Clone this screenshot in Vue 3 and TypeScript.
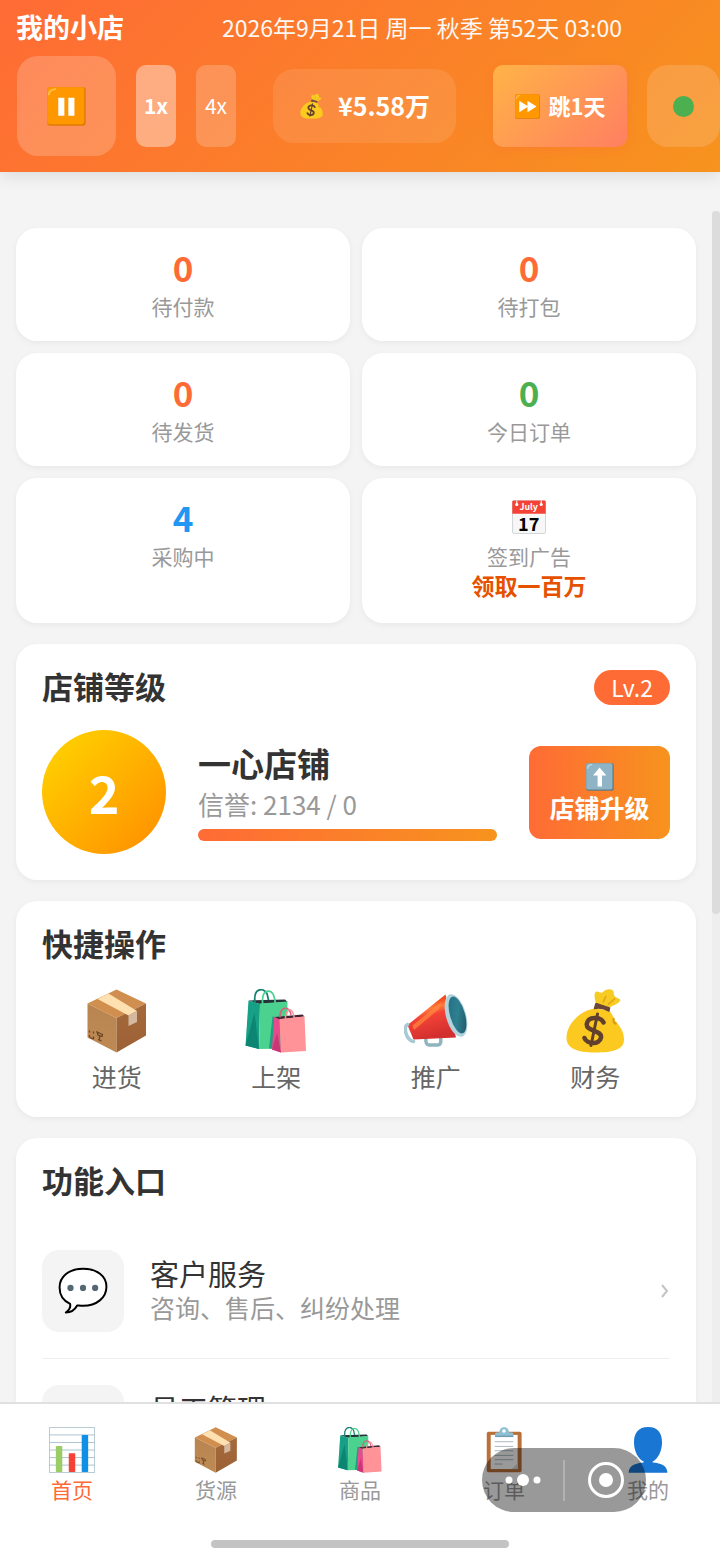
<script setup lang="ts">
import { ref } from 'vue'

interface Stat {
  value: number
  label: string
  tone: 'orange' | 'green' | 'blue'
}
interface Entry {
  icon: string
  label: string
}
interface Feature {
  icon: string
  title: string
  hint: string
}

const stats: Stat[] = [
  { value: 0, label: '待付款', tone: 'orange' },
  { value: 0, label: '待打包', tone: 'orange' },
  { value: 0, label: '待发货', tone: 'orange' },
  { value: 0, label: '今日订单', tone: 'green' },
  { value: 4, label: '采购中', tone: 'blue' },
]

const actions: Entry[] = [
  { icon: 'box', label: '进货' },
  { icon: 'bags', label: '上架' },
  { icon: 'horn', label: '推广' },
  { icon: 'money', label: '财务' },
]

const features: Feature[] = [
  { icon: 'chat', title: '客户服务', hint: '咨询、售后、纠纷处理' },
  { icon: '', title: '员工管理', hint: '' },
]

const tabs: Entry[] = [
  { icon: 'chart', label: '首页' },
  { icon: 'box', label: '货源' },
  { icon: 'bags', label: '商品' },
  { icon: 'clipboard', label: '订单' },
  { icon: 'person', label: '我的' },
]

const speeds = [1, 4]
const speed = ref(1)
const activeTab = ref('首页')
</script>

<template>
  <div class="app">
    <svg class="sprite" aria-hidden="true">
      <defs>
        <linearGradient id="gHorn" x1="0" y1="0" x2="0.3" y2="1">
          <stop offset="0" stop-color="#c62828" />
          <stop offset="0.3" stop-color="#f4511e" />
          <stop offset="0.42" stop-color="#ff7a3d" />
          <stop offset="0.55" stop-color="#f44336" />
          <stop offset="1" stop-color="#d32f2f" />
        </linearGradient>
        <linearGradient id="gBell" x1="0" y1="0" x2="1" y2="1">
          <stop offset="0" stop-color="#1f6f80" />
          <stop offset="0.5" stop-color="#2f7f90" />
          <stop offset="1" stop-color="#1c4f5e" />
        </linearGradient>
        <linearGradient id="gBoxL" x1="0" y1="0" x2="0" y2="1">
          <stop offset="0" stop-color="#b98450" />
          <stop offset="1" stop-color="#bd8a54" />
        </linearGradient>
        <linearGradient id="gBoxR" x1="0" y1="0" x2="0" y2="1">
          <stop offset="0" stop-color="#a56a3b" />
          <stop offset="1" stop-color="#9c6035" />
        </linearGradient>
      </defs>

      <symbol id="i-box" viewBox="0 0 128 128">
        <path d="M63 1 5 29l58 29 59-29z" fill="#d18f4f" />
        <path d="M5 29v68l58 30V58z" fill="url(#gBoxL)" />
        <path d="M122 29v64l-59 34V58z" fill="url(#gBoxR)" />
        <path d="M47 9 25 20l62 33 17-9z" fill="#ffe0b0" />
        <path d="m87 53 17-9v22l-17 8z" fill="#d5b8a0" />
        <path d="M9 83v4m0 5v4M17 85v4m0 6v4M9 97l9 3M24 86l11 5-1 4-8-3zM29 94v7m-3 0 7 3" fill="none" stroke="#694525" stroke-width="2.5" />
      </symbol>

      <symbol id="i-bags" viewBox="0 0 128 128">
        <path d="M9 23 82 21l5 5-55 4z" fill="#263238" />
        <path d="M9 23 32 30 30 120 3 113z" fill="#16a085" />
        <path d="M21 48 30 120 3 113z" fill="#0c8573" />
        <path d="M32 29 87 25 86 119 30 120z" fill="#4bd28f" />
        <path d="M57 55 71 58 72 120 50 119z" fill="#219f83" />
        <path d="M22 27C18-2 38-4 46 9L49 22" fill="none" stroke="#16806f" stroke-width="3.5" />
        <path d="M38 39C34 9 42 4 49 4s13 8 14 30" fill="none" stroke="#4bd28f" stroke-width="3.5" />
        <path d="M61 56 117 51 121 55 71 61z" fill="#3e2432" />
        <path d="M60 56 71 61 74 127 56 121z" fill="#e84a8b" />
        <path d="M66 88 74 127 56 121z" fill="#c93675" />
        <path d="M71 60 121 55 124 124 74 127z" fill="#ff9398" />
        <path d="M72 57C70 35 92 31 94 53" fill="none" stroke="#dc5c7e" stroke-width="3" />
        <path d="M83 64c-2-23 15-35 18-2" fill="none" stroke="#ff9398" stroke-width="3" />
      </symbol>

      <symbol id="i-horn" viewBox="0 0 128 128">
        <path d="M44 97q-2 15 7 15h17q8-1 5-16" fill="none" stroke="#90b4be" stroke-width="7" />
        <path d="M7 72 83 11 104 97 19 101z" fill="url(#gHorn)" />
        <path d="M17 73 76 25l-7 16-49 41z" fill="#ff8a3d" opacity=".7" />
        <path d="M7 71C-2 76 4 102 19 105" fill="none" stroke="#a7cad4" stroke-width="7" stroke-linecap="round" />
        <ellipse cx="104" cy="53" rx="20" ry="44" transform="rotate(-16 104 53)" fill="#b2d3dc" />
        <ellipse cx="107" cy="52" rx="15" ry="38" transform="rotate(-16 107 52)" fill="url(#gBell)" />
      </symbol>

      <symbol id="i-money" viewBox="0 0 128 128">
        <path d="M67 31C61 15 62 4 69 5q5 3 10 2C86-2 99-1 101 5c1 4 0 8 4 11 5 4 11 2 9 8-4 6-13 8-21 13z" fill="#f8cb22" />
        <path d="m80 27 6-13M90 31l14-12" stroke="#dda414" stroke-width="3" fill="none" />
        <path d="M64 39C34 43 7 70 7 98c0 20 20 29 57 29s58-6 58-26c0-16-9-28-17-37-5-5-4-12-13-21z" fill="#fcc921" />
        <path d="M102 58q-4 9 5 12" stroke="#dc9b12" stroke-width="4" fill="none" />
        <path d="m66 29 27 9-1 6q-14-8-29-5z" fill="#6b4638" stroke="#6b4638" stroke-width="3" stroke-linejoin="round" />
        <path d="M81 67C76 56 52 54 48 68c-5 18 31 13 28 29-3 16-29 13-33 1" fill="none" stroke="#61402e" stroke-width="9" stroke-linecap="round" />
        <path d="m69 50-13 63" stroke="#61402e" stroke-width="6" stroke-linecap="round" />
      </symbol>

      <symbol id="i-chat" viewBox="0 0 128 128">
        <path d="M64 7c36 0 60 19 60 46 0 28-25 49-60 49-7 0-12-1-15-1-7 13-16 18-29 18 8-6 13-14 11-22C14 89 4 76 4 55 4 27 28 7 64 7z" fill="#fff" stroke="#000" stroke-width="5" stroke-linejoin="round" />
        <g fill="#546874"><circle cx="32" cy="56" r="8" /><circle cx="64" cy="56" r="8" /><circle cx="95" cy="56" r="8" /></g>
      </symbol>

      <symbol id="i-chart" viewBox="0 0 128 128">
        <path d="M1 1h126v126H1z" fill="#fff" />
        <path d="M1 22h126M1 43h126M1 64h126M1 85h126M1 106h126M1 1h126v126H1z" fill="none" stroke="#a5bdc7" stroke-width="2.5" />
        <rect x="19" y="53" width="18" height="72" rx="2" fill="#9ccc65" />
        <rect x="55" y="73" width="18" height="52" rx="2" fill="#f44336" />
        <rect x="91" y="22" width="18" height="103" rx="2" fill="#0f8fe5" />
      </symbol>

      <symbol id="i-clipboard" viewBox="0 0 128 128">
        <rect x="16" y="13" width="97" height="113" rx="5" fill="#ba7139" />
        <path d="M27 22h75v95H27z" fill="#fff" />
        <path d="m102 101-16 16h16z" fill="#cfd8dc" />
        <path d="M38 41h52M38 54h52M38 66h52M38 79h52M38 91h52M38 103h22" stroke="#8b9da6" stroke-width="2" />
        <path d="M51 15c0-19 27-19 27 0h8q4 0 4 5v8H39v-8q0-5 4-5z" fill="#8fbfd2" />
        <circle cx="64" cy="11" r="5" fill="#fff" />
        <path d="M39 24h51v4H39z" fill="#6f9caf" />
      </symbol>

      <symbol id="i-person" viewBox="0 0 128 128">
        <path d="M64 0c28 0 39 17 39 43 0 24-12 47-26 53v3c25 2 40 9 41 28H10c1-19 17-26 42-28v-3C38 91 25 68 25 43 25 17 37 0 64 0z" fill="#1976d2" />
      </symbol>

      <symbol id="i-pause" viewBox="0 0 128 128">
        <rect x="1" y="1" width="126" height="126" rx="9" fill="#e07c00" />
        <rect x="1" y="1" width="121" height="121" rx="8" fill="#ff9800" />
        <path d="M6 24Q8 9 27 7" fill="none" stroke="#ffbd52" stroke-width="6" stroke-linecap="round" />
        <path d="M37 35h20v59H37zM70 35h20v59H70z" fill="#fff" />
      </symbol>

      <symbol id="i-forward" viewBox="0 0 128 128">
        <rect x="1" y="1" width="126" height="126" rx="8" fill="#e07c00" />
        <rect x="1" y="1" width="122" height="122" rx="8" fill="#ff9800" />
        <path d="M7 22Q9 9 24 7" fill="none" stroke="#ffbd52" stroke-width="6" stroke-linecap="round" />
        <path d="M22 34v60l42-27v27l46-30-46-30v27z" fill="#fff" />
      </symbol>

      <symbol id="i-up" viewBox="0 0 128 128">
        <rect x="1" y="1" width="126" height="126" rx="8" fill="#5c7d8b" />
        <rect x="1" y="1" width="120" height="120" rx="8" fill="#8eb4c5" />
        <path d="M7 24Q9 9 26 7" fill="none" stroke="#c4dce6" stroke-width="6" stroke-linecap="round" />
        <path d="M62 21 93 57H73v50H53V57H32z" fill="#fff" />
      </symbol>
    </svg>

    <header class="topbar">
      <div class="headline">
        <h1 class="shop">我的小店</h1>
        <time class="date" datetime="2026-09-21T03:00">2026年9月21日 周一 秋季 第52天 03:00</time>
      </div>
      <div class="controls">
        <div class="group">
          <button class="pause" type="button" aria-label="暂停"><svg class="ico-pause"><use href="#i-pause" /></svg></button>
          <button
            v-for="s in speeds"
            :key="s"
            class="speed"
            :class="{ on: speed === s }"
            type="button"
            @click="speed = s"
          >{{ s }}x</button>
        </div>
        <div class="cash"><svg class="ico-small"><use href="#i-money" /></svg><span>¥5.58万</span></div>
        <div class="group">
          <button class="skip" type="button"><svg class="ico-small"><use href="#i-forward" /></svg><span>跳1天</span></button>
          <button class="status" type="button" aria-label="在线状态"><span class="dot"></span></button>
        </div>
      </div>
    </header>

    <div class="body">
      <main class="content">
        <section class="stats">
          <div v-for="s in stats" :key="s.label" class="card stat">
            <strong class="num" :class="s.tone">{{ s.value }}</strong>
            <span class="caption">{{ s.label }}</span>
          </div>
          <button class="card stat" type="button">
            <span class="num">
              <svg class="ico-cal" viewBox="0 0 128 128">
                <rect x="2" y="3" width="124" height="123" rx="5" fill="#f7f7f7" stroke="#c6cdd1" stroke-width="3" />
                <path d="M1 52V7q0-5 5-5h116q5 0 5 5v45z" fill="#f44336" />
                <path d="M18 2v15M110 2v15" stroke="#fff" stroke-width="4" />
                <circle cx="18" cy="17" r="6" fill="#fff" />
                <circle cx="110" cy="17" r="6" fill="#fff" />
                <text x="63" y="37" class="cal-month">July</text>
                <text x="63" y="116" class="cal-day">17</text>
              </svg>
            </span>
            <span class="caption">签到广告</span>
            <span class="claim">领取一百万</span>
          </button>
        </section>

        <section class="card panel">
          <div class="panel-head">
            <h2>店铺等级</h2>
            <span class="badge">Lv.2</span>
          </div>
          <div class="level">
            <div class="medal">2</div>
            <div class="info">
              <h3>一心店铺</h3>
              <p>信誉: 2134 / 0</p>
              <div class="bar"></div>
            </div>
            <button class="upgrade" type="button">
              <svg class="ico-up"><use href="#i-up" /></svg>
              <span>店铺升级</span>
            </button>
          </div>
        </section>

        <section class="card panel">
          <div class="panel-head"><h2>快捷操作</h2></div>
          <div class="actions">
            <button v-for="a in actions" :key="a.label" class="action" type="button">
              <svg class="ico-action"><use :href="'#i-' + a.icon" /></svg>
              <span>{{ a.label }}</span>
            </button>
          </div>
        </section>

        <section class="card panel">
          <div class="panel-head"><h2>功能入口</h2></div>
          <a v-for="f in features" :key="f.title" class="feature" href="#">
            <span class="tile"><svg v-if="f.icon" class="ico-tile"><use :href="'#i-' + f.icon" /></svg></span>
            <span class="desc">
              <span class="name">{{ f.title }}</span>
              <span class="hint">{{ f.hint }}</span>
            </span>
            <svg class="chevron" viewBox="0 0 8 14"><path d="m1 1 5 6-5 6" fill="none" stroke="#c4c4c4" stroke-width="2" /></svg>
          </a>
        </section>
      </main>
      <div class="rail"><div class="thumb"></div></div>
    </div>

    <footer class="bottom">
      <nav class="tabs">
        <a
          v-for="t in tabs"
          :key="t.label"
          class="tab"
          :class="{ active: activeTab === t.label }"
          href="#"
          @click.prevent="activeTab = t.label"
        >
          <svg class="ico-tab"><use :href="'#i-' + t.icon" /></svg>
          <span>{{ t.label }}</span>
        </a>
      </nav>
      <div class="indicator"></div>
      <div class="capsule">
        <button type="button" aria-label="更多">
          <svg class="more" viewBox="0 0 36 14"><g fill="#fff"><circle cx="4" cy="7" r="3.5" /><circle cx="18" cy="7" r="6" /><circle cx="32" cy="7" r="3.5" /></g></svg>
        </button>
        <span class="split"></span>
        <button type="button" aria-label="关闭">
          <svg class="target" viewBox="0 0 36 36"><circle cx="18" cy="18" r="16.5" fill="none" stroke="#fff" stroke-width="3" /><circle cx="18" cy="18" r="7" fill="#fff" /></svg>
        </button>
      </div>
    </footer>
  </div>
</template>

<style>
body {
  background: #f4f4f4;
}
</style>

<style scoped>
.app {
  position: relative;
  display: flex;
  flex-direction: column;
  height: 100vh;
  overflow: hidden;
  background: #f4f4f4;
  color: #333;
  font-family: "Noto Sans CJK SC", "Noto Sans", sans-serif;
}
.sprite {
  position: absolute;
  width: 0;
  height: 0;
}
svg {
  display: block;
  flex: none;
}
h1, h2, h3, p {
  margin: 0;
}
button {
  padding: 0;
  border: 0;
  background: none;
  color: inherit;
  font: inherit;
  cursor: pointer;
}
a {
  color: inherit;
  text-decoration: none;
}

/* top bar */
.topbar {
  flex: none;
  color: #fff;
  background: linear-gradient(135deg, #ff6b35, #f7931e);
  box-shadow: 0 4px 16px rgba(0, 0, 0, 0.1);
}
.headline {
  display: flex;
  align-items: center;
  height: 53px;
  padding: 0 0 3px 16px;
}
.shop {
  font-size: 27px;
  line-height: 36px;
  font-weight: 700;
}
.date {
  flex: 1;
  text-align: center;
  font-size: 23px;
  line-height: 36px;
  white-space: nowrap;
  opacity: 0.95;
}
.controls {
  display: flex;
  align-items: center;
  gap: 37px;
  padding: 0 0 16px 17px;
}
.group {
  display: flex;
  align-items: center;
  gap: 20px;
}
.pause {
  display: grid;
  place-items: center;
  width: 99px;
  height: 100px;
  border-radius: 21px;
  background: rgba(255, 255, 255, 0.2);
}
.ico-pause {
  width: 39px;
  height: 39px;
}
.speed {
  width: 40px;
  height: 82px;
  padding-bottom: 2px;
  border-radius: 10px;
  background: rgba(255, 255, 255, 0.2);
  font-size: 21px;
}
.speed.on {
  background: rgba(255, 255, 255, 0.4);
  font-weight: 700;
}
.cash {
  flex: 1;
  display: flex;
  align-items: center;
  justify-content: center;
  gap: 14px;
  height: 74px;
  border-radius: 21px;
  background: rgba(255, 255, 255, 0.1);
  font-size: 25px;
  font-weight: 700;
  white-space: nowrap;
}
.cash span,
.skip span {
  padding-bottom: 3px;
}
.ico-small {
  width: 25px;
  height: 25px;
}
.skip {
  display: flex;
  align-items: center;
  justify-content: center;
  gap: 9px;
  width: 134px;
  height: 82px;
  border-radius: 10px;
  background: linear-gradient(135deg, #ffb347, #ff7f61);
  box-shadow: 0 2px 8px rgba(255, 107, 53, 0.3);
  font-size: 22px;
  font-weight: 700;
  white-space: nowrap;
}
.status {
  display: grid;
  place-items: center;
  width: 73px;
  height: 82px;
  border-radius: 21px;
  background: rgba(255, 255, 255, 0.15);
}
.dot {
  width: 21px;
  height: 21px;
  border-radius: 50%;
  background: #4caf50;
}

/* scrolling area */
.body {
  flex: 1;
  min-height: 0;
  display: flex;
  margin-top: 39px;
}
.content {
  flex: 1;
  min-width: 0;
  overflow: hidden;
  padding: 17px 16px 0;
}
.rail {
  flex: none;
  width: 8px;
  background: #eee;
}
.thumb {
  height: 59%;
  border-radius: 4px;
  background: #dcdcdc;
}
.card {
  border-radius: 21px;
  background: #fff;
  box-shadow: 0 2px 6px rgba(0, 0, 0, 0.05);
}
.stats {
  display: grid;
  grid-template-columns: 1fr 1fr;
  gap: 12px;
}
.stat {
  display: flex;
  flex-direction: column;
  align-items: center;
  padding: 18px 0 22px;
}
.num {
  display: grid;
  place-items: center;
  height: 41px;
  margin-bottom: 7px;
  font-size: 35px;
  line-height: 41px;
  font-weight: 700;
}
.orange {
  color: #ff6b35;
}
.green {
  color: #4caf50;
}
.blue {
  color: #2196f3;
}
.caption {
  font-size: 21px;
  line-height: 25px;
  color: #999;
}
.claim {
  font-size: 23px;
  line-height: 32px;
  font-weight: 700;
  color: #e65100;
}
.ico-cal {
  width: 34px;
  height: 34px;
}
.cal-month,
.cal-day {
  font-weight: 700;
  text-anchor: middle;
}
.cal-month {
  font-size: 33px;
  fill: #fff;
}
.cal-day {
  font-size: 68px;
  fill: #000;
}

/* panels */
.panel {
  margin-top: 21px;
  padding: 24px 26px 26px;
}
.panel-head {
  display: flex;
  align-items: center;
  justify-content: space-between;
  height: 36px;
  margin-bottom: 26px;
}
.panel-head h2 {
  font-size: 31px;
  line-height: 36px;
  font-weight: 700;
}
.badge {
  margin-top: 2px;
  padding: 0 17px;
  border-radius: 18px;
  background: #ff6b35;
  color: #fff;
  font-size: 23px;
  line-height: 35px;
}
.level {
  display: flex;
  align-items: center;
  gap: 32px;
}
.medal {
  display: grid;
  place-items: center;
  width: 124px;
  height: 124px;
  border-radius: 50%;
  background: linear-gradient(135deg, #ffd700, #ff8c00);
  color: #fff;
  font-size: 52px;
  line-height: 60px;
  font-weight: 700;
}
.info {
  flex: 1;
}
.info h3 {
  font-size: 33px;
  line-height: 40px;
  font-weight: 700;
}
.info p {
  margin: 3px 0 7px;
  font-size: 26px;
  line-height: 36px;
  color: #999;
}
.bar {
  height: 12px;
  border-radius: 6px;
  background: linear-gradient(90deg, #ff6b35, #f7931e);
}
.upgrade {
  display: flex;
  flex-direction: column;
  align-items: center;
  width: 141px;
  padding: 17px 0 16px;
  border-radius: 12px;
  background: linear-gradient(90deg, #ff6b35, #f7931e);
  color: #fff;
  font-size: 25px;
  line-height: 32px;
  font-weight: 700;
}
.ico-up {
  width: 28px;
  height: 28px;
}
.actions {
  display: grid;
  grid-template-columns: repeat(4, 1fr);
  gap: 10px;
  padding-top: 2px;
}
.action {
  display: flex;
  flex-direction: column;
  align-items: center;
  gap: 8px;
  font-size: 25px;
  line-height: 30px;
  color: #666;
}
.ico-action {
  width: 64px;
  height: 64px;
}
.feature {
  display: flex;
  align-items: center;
  gap: 26px;
  padding: 26px 0;
  border-bottom: 1px solid #eee;
}
.tile {
  display: grid;
  place-items: center;
  width: 82px;
  height: 82px;
  border-radius: 17px;
  background: #f4f4f4;
}
.ico-tile {
  width: 50px;
  height: 50px;
}
.desc {
  flex: 1;
  display: flex;
  flex-direction: column;
  min-height: 72px;
}
.name {
  font-size: 29px;
  line-height: 36px;
}
.hint {
  font-size: 25px;
  line-height: 33px;
  color: #999;
}
.chevron {
  width: 8px;
  height: 14px;
  margin-right: 1px;
}

/* bottom navigation */
.bottom {
  position: relative;
  flex: none;
  padding: 23px 0 15px;
  border-top: 2px solid #e0e0e0;
  background: #fff;
}
.tabs {
  display: flex;
}
.tab {
  flex: 1;
  display: flex;
  flex-direction: column;
  align-items: center;
  gap: 2px;
  font-size: 21px;
  line-height: 28px;
  color: #999;
}
.tab.active {
  color: #ff6b35;
}
.ico-tab {
  width: 46px;
  height: 46px;
}
.indicator {
  width: 298px;
  height: 8px;
  margin: 37px auto 0;
  border-radius: 4px;
  background: #c3c3c3;
}
.capsule {
  position: absolute;
  top: 44px;
  right: 74px;
  display: flex;
  align-items: center;
  width: 164px;
  height: 64px;
  border-radius: 32px;
  background: rgba(0, 0, 0, 0.4);
}
.capsule button {
  flex: 1;
  display: grid;
  place-items: center;
}
.split {
  width: 2px;
  height: 41px;
  background: rgba(255, 255, 255, 0.25);
}
.more {
  width: 36px;
  height: 14px;
}
.target {
  width: 36px;
  height: 36px;
}
</style>
